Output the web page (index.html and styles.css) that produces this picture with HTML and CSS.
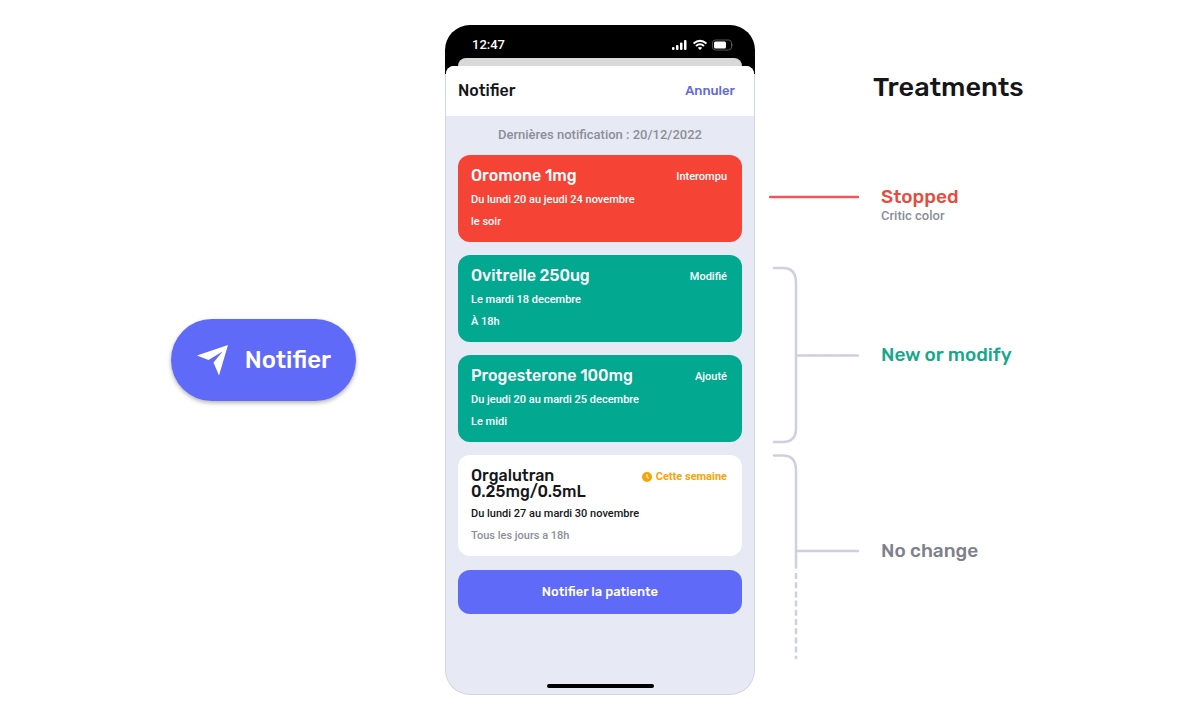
FILE: index.html
```html
<!DOCTYPE html>
<html lang="fr">
<head>
<meta charset="utf-8">
<meta name="viewport" content="width=device-width, initial-scale=1">
<title>Notifier</title>
<link rel="stylesheet" href="styles.css">
</head>
<body>
<main class="stage">
  <div class="action">
    <button class="pill" type="button">
      <svg class="plane" width="32" height="32" viewBox="0 0 32 32" aria-hidden="true"><path fill="#fff" d="M31 1 0 11.500l11.500 4.500L25.500 7.500 16.500 18.500 22 31.500z"/></svg>
      Notifier
    </button>
  </div>

  <section class="phone">
    <div class="status">
      <div class="status-row">
        <span>12:47</span>
        <svg width="63" height="12" viewBox="0 0 63 12" aria-hidden="true">
          <g fill="#fff">
            <rect x="1" y="8" width="2.500" height="3" rx="1"/><rect x="5" y="6" width="2.500" height="5" rx="1"/><rect x="9" y="3.500" width="2.500" height="7.500" rx="1"/><rect x="13" y="1" width="2.500" height="10" rx="1"/>
            <rect x="43" y="2.500" width="12" height="7" rx="1.500"/>
          </g>
          <path d="M22.500 4.500q6.500-5.500 13 0M25 7q4-3.500 8 0" fill="none" stroke="#fff" stroke-width="1.800"/>
          <path d="M26.800 8.800q2.200-1.800 4.400 0L29 11z" fill="#fff"/>
          <rect x="41.500" y="1" width="19" height="10" rx="3" fill="none" stroke="#555"/>
          <path d="M61.500 4.500q1.500 1.500 0 3z" fill="#666"/>
        </svg>
      </div>
      <div class="sheet-behind"></div>
    </div>
    <div class="sheet">
      <header class="bar">
        <h1>Notifier</h1>
        <button class="cancel" type="button">Annuler</button>
      </header>
      <div class="content">
        <p class="last">Dernières notification : 20/12/2022</p>
        <article class="card stopped">
          <div class="card-head"><h2>Oromone 1mg</h2><span class="tag">Interompu</span></div>
          <p>Du lundi 20 au jeudi 24 novembre</p>
          <p class="when">le soir</p>
        </article>
        <article class="card changed">
          <div class="card-head"><h2>Ovitrelle 250ug</h2><span class="tag">Modifié</span></div>
          <p>Le mardi 18 decembre</p>
          <p class="when">À 18h</p>
        </article>
        <article class="card changed">
          <div class="card-head"><h2>Progesterone 100mg</h2><span class="tag">Ajouté</span></div>
          <p>Du jeudi 20 au mardi 25 decembre</p>
          <p class="when">Le midi</p>
        </article>
        <article class="card plain">
          <div class="card-head"><h2>Orgalutran 0.25mg/0.5mL</h2><span class="tag"><svg width="10" height="10" viewBox="0 0 10 10" aria-hidden="true"><circle cx="5" cy="5" r="5" fill="#faa307"/><path d="M5 2v3.200l2 .8" fill="none" stroke="#fff"/></svg>Cette semaine</span></div>
          <p>Du lundi 27 au mardi 30 novembre</p>
          <p class="when">Tous les jours a 18h</p>
        </article>
        <button class="submit" type="button">Notifier la patiente</button>
        <div class="home"></div>
      </div>
    </div>
  </section>

  <section class="legend" lang="en">
    <h2 class="legend-title">Treatments</h2>
    <ul>
      <li class="row">
        <svg width="90" height="24" viewBox="0 0 90 24" aria-hidden="true"><path d="M1 12h88" stroke="#f2545b" stroke-width="2.500" stroke-linecap="round"/></svg>
        <div class="label red">Stopped<small>Critic color</small></div>
      </li>
      <li class="row new">
        <svg width="90" height="178" viewBox="0 0 90 178" aria-hidden="true"><path d="M5 2h9q13 0 13 15v145q0 14-13 14H5M27 89.500h62" fill="none" stroke="#cfcfdd" stroke-width="2.500" stroke-linecap="round"/></svg>
        <div class="label green">New or modify</div>
      </li>
      <li class="row same">
        <svg width="90" height="206" viewBox="0 0 90 206" aria-hidden="true"><g fill="none" stroke="#cfcfdd" stroke-width="2.500"><path d="M5 1.500h9q13 0 13 15v97M27 97h62" stroke-linecap="round"/><path d="M27 119v86" stroke-dasharray="6 3.200"/></g></svg>
        <div class="label grey">No change</div>
      </li>
    </ul>
  </section>
</main>
</body>
</html>
```
FILE: styles.css
```css
* { box-sizing: border-box; }
body {
  margin: 0;
  background: #fff;
  color: #15161a;
  font-family: Rubik, Roboto, sans-serif;
  font-weight: 500;
}
h1, h2, p, ul { margin: 0; padding: 0; font-weight: 500; }
ul { list-style: none; }
button { border: 0; font: inherit; cursor: pointer; }
svg { display: block; flex: none; }

.stage {
  display: grid;
  grid-template-columns: 1fr 310px 1fr;
  min-height: 100vh;
  padding: 25px 0;
}
.action { display: flex; justify-content: flex-end; align-items: center; padding-right: 89px; }
.pill {
  display: flex;
  align-items: center;
  gap: 16px;
  padding: 25px 25px 25px 26px;
  border-radius: 42px;
  background: #606af8;
  color: #fff;
  font-size: 24px;
  line-height: 32px;
  box-shadow: 0 2px 4px rgba(0, 0, 0, .3);
}

.phone {
  display: flex;
  flex-direction: column;
  overflow: hidden;
  border: 1px solid transparent;
  border-radius: 25px;
  background: linear-gradient(#000 0 49px, #d3d5de 49px) border-box;
}
.status { padding: 11px 12px 0; color: #fff; font-family: Roboto, sans-serif; font-size: 13px; line-height: 16px; }
.status-row { display: flex; justify-content: space-between; align-items: center; padding: 0 8px 5px 14px; }
.sheet-behind { height: 8px; border-radius: 8px 8px 0 0; background: #d9d9d9; }
.sheet {
  display: flex;
  flex-direction: column;
  flex: 1;
  overflow: hidden;
  border-radius: 8px 8px 0 0;
  background: #e7eaf4;
}
.bar {
  display: flex;
  justify-content: space-between;
  align-items: center;
  padding: 15px 19px 15px 12px;
  background: #fff;
}
.bar h1 { font-size: 16px; line-height: 20px; }
.cancel { padding: 0; background: none; color: #6468e4; font-size: 13px; line-height: 16px; }
.content { display: flex; flex-direction: column; flex: 1; gap: 13px; padding: 11px 12px 6px; }
.last { color: #8b8e99; font-family: Roboto, sans-serif; font-size: 13px; line-height: 16px; text-align: center; margin-bottom: -1px; }

.card { padding: 13px 15px 13px 13px; border-radius: 12px; color: #fff; font-family: Roboto, sans-serif; font-size: 11px; line-height: 14px; }
.card-head { display: flex; justify-content: space-between; gap: 12px; margin-bottom: 7px; }
.card h2 { font-family: Rubik, Roboto, sans-serif; font-size: 16px; line-height: 16px; }
.tag { display: flex; align-items: center; gap: 4px; height: 18px; white-space: nowrap; }
.when { margin-top: 8px; }
.stopped { background: #f54336; }
.changed { background: #03a890; }
.plain { background: #fff; color: #15161a; }
.plain h2 { max-width: 120px; }
.plain .tag { color: #faa307; font-weight: 700; }
.plain .when { color: #8b8e99; }
.submit { margin-top: 1px; padding: 14px; border-radius: 12px; background: #606af8; color: #fff; font-size: 13px; line-height: 16px; }
.home { width: 107px; height: 4px; margin: auto auto 0; border-radius: 2px; background: #000; }

.legend { padding: 46px 0 0 14px; }
.legend-title { margin: 0 0 82px 104px; font-size: 27px; line-height: 32px; }
.row { display: flex; gap: 22px; }
.label { font-size: 19px; line-height: 24px; white-space: nowrap; }
.label small { display: block; color: #8b8e99; font-family: Roboto, sans-serif; font-size: 13px; line-height: 14px; }
.new { align-items: center; margin: 43px 0 10px; }
.same .label { padding-top: 85px; }
.red { color: #e84b40; }
.green { color: #16a88b; }
.grey { color: #7e818c; }
```
